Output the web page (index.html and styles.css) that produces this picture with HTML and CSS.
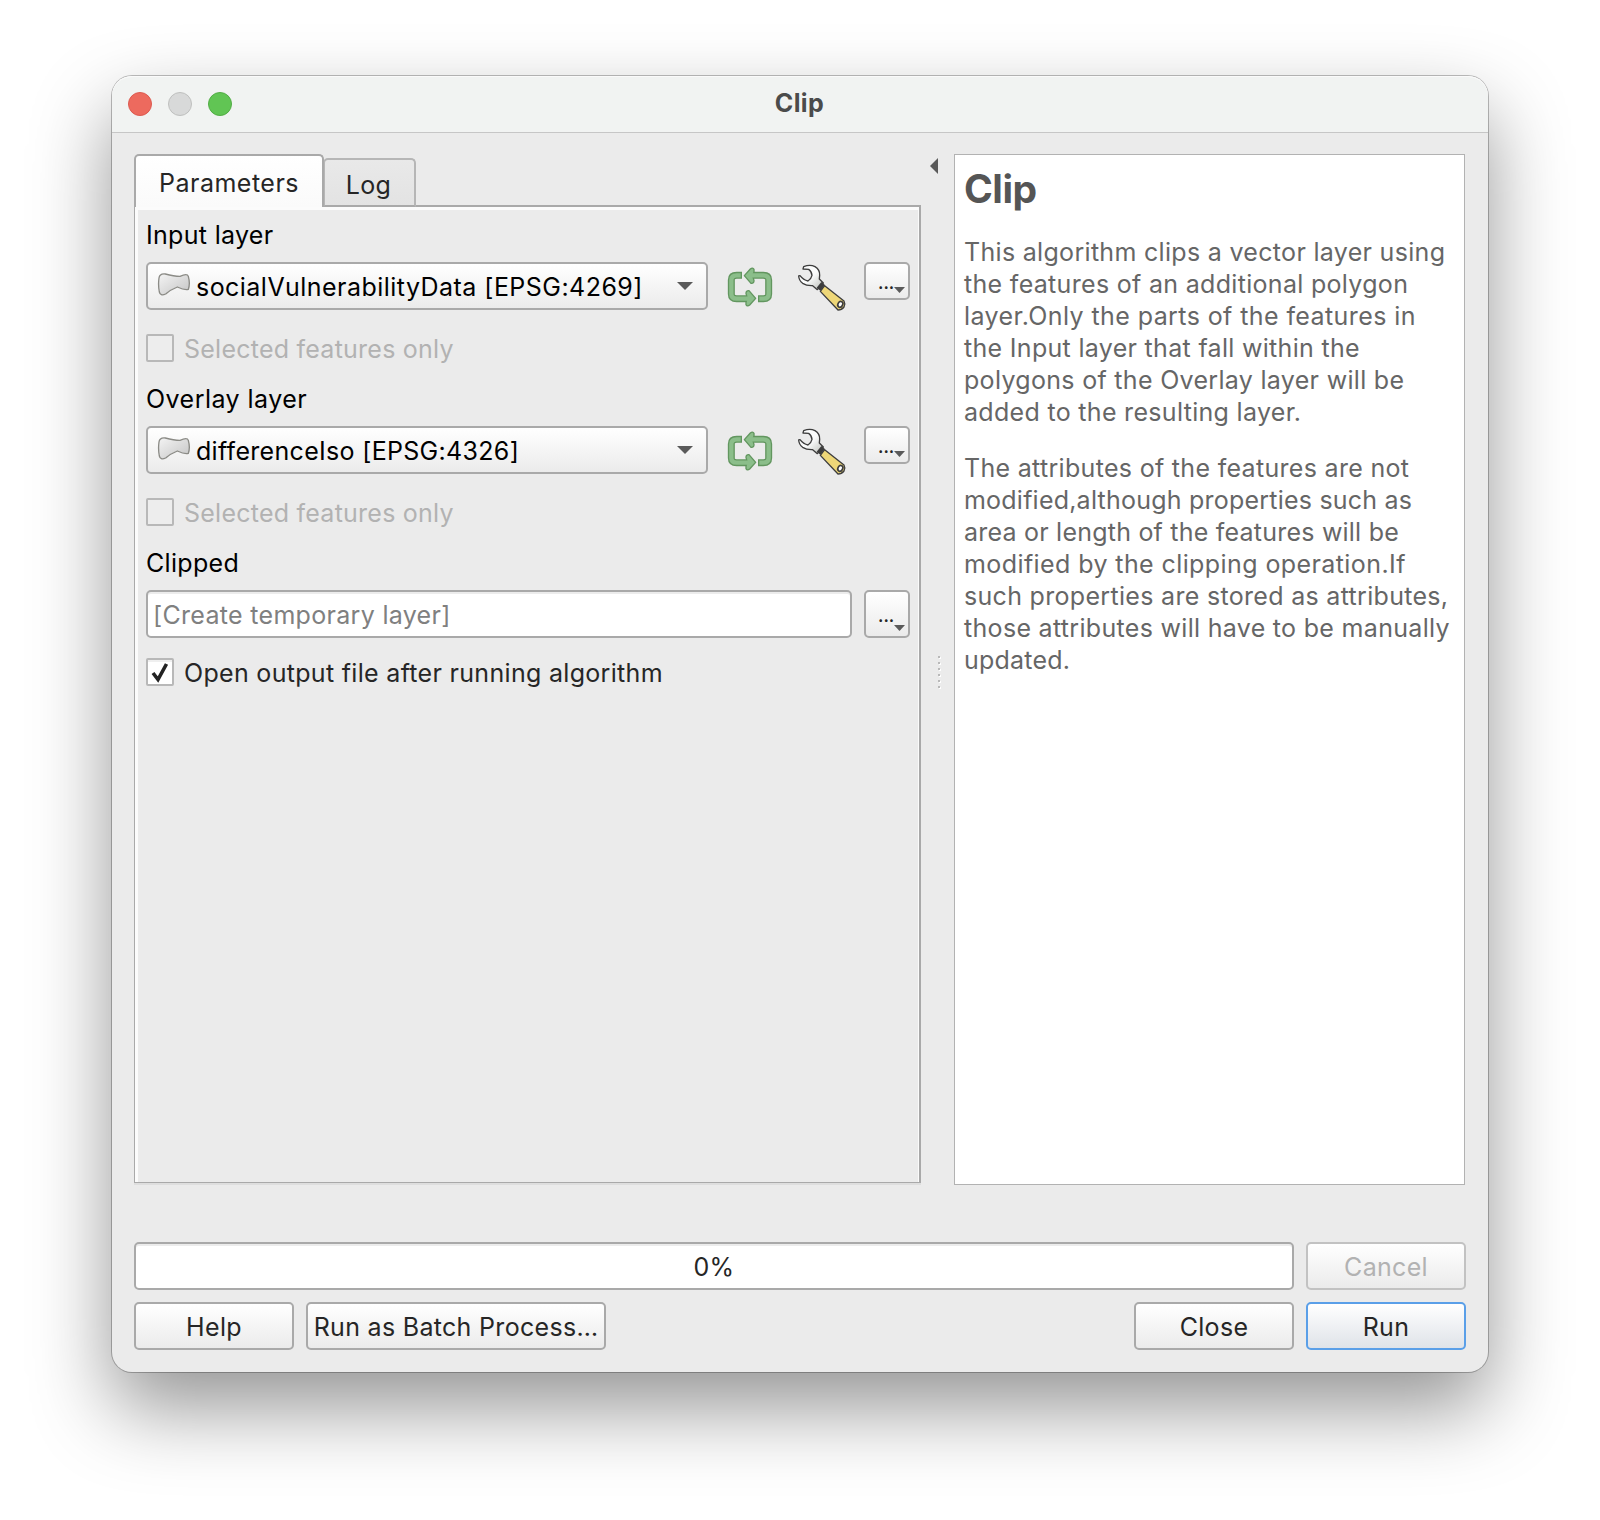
FILE: index.html
```html
<!DOCTYPE html>
<html lang="en">
<head>
<meta charset="utf-8">
<title>Clip</title>
<link rel="stylesheet" href="styles.css">
</head>
<body>
<svg class="defs" width="0" height="0" aria-hidden="true">
  <defs>
    <linearGradient id="poly-fill" x1="0" y1="0" x2="1" y2="1"><stop offset="0" stop-color="#f4f4f4"/><stop offset="1" stop-color="#c4c4c4"/></linearGradient>
    <linearGradient id="steel" x1="0" y1="0" x2="1" y2="1"><stop offset=".5" stop-color="#fbfcfc"/><stop offset="1" stop-color="#b9bcb6"/></linearGradient>
    <symbol id="polygon" viewBox="171 637 102 75">
      <path d="M177 655Q179 641 196 643Q222 650 240 650Q262 640 265 650Q271 672 265 689Q254 692 232 682Q212 690 197 703Q181 710 178 697Q174 676 177 655Z" fill="url(#poly-fill)" stroke="#8b8b86" stroke-width="4"/>
    </symbol>
    <symbol id="iterate" viewBox="51 48 138 126">
      <g fill="none" stroke="#62965f" stroke-width="21" stroke-linejoin="round">
        <path d="M96 76H80Q64 76 64 90V132Q64 146 80 146H118M144 146H160Q176 146 176 132V90Q176 76 160 76H122"/>
      </g>
      <g fill="#8bbe8a" stroke="#62965f" stroke-width="4" stroke-linejoin="round">
        <path d="M103 77L121 57Q128 51 132 58V66L128 77L132 92Q132 101 123 100Z"/>
        <path d="M137 145L119 165Q112 171 108 164V156L112 145L108 130Q108 121 117 122Z"/>
      </g>
      <path d="M92 76H80Q64 76 64 90V132Q64 146 80 146H124M148 146H160Q176 146 176 132V90Q176 76 160 76H116" fill="none" stroke="#8bbe8a" stroke-width="13"/>
    </symbol>
    <symbol id="wrench" viewBox="261 39 150 150">
      <path d="M279 57L281 50Q300 42 315 50Q330 59 329 76L328 87L340 99L322 119L308 107Q290 108 278 100Q267 92 266 78L270 77Q280 90 294 93Q303 88 306 76Q305 64 296 58Z" fill="url(#steel)" stroke="#3d3d3d" stroke-width="4" stroke-linejoin="round"/>
      <path d="M334 96L345 105L331 122L320 113Z" fill="#3d3d3d"/>
      <path d="M344 107L402 153Q407 162 402 171Q395 180 384 180L331 124Z" fill="#eed778" stroke="#3d3d3d" stroke-width="4" stroke-linejoin="round"/>
      <ellipse cx="391" cy="163" rx="7" ry="9" transform="rotate(30 391 163)" fill="#fff" stroke="#3d3d3d" stroke-width="5"/>
    </symbol>
  </defs>
</svg>

<main class="window">
  <header class="titlebar">
    <div class="lights"><i class="light red"></i><i class="light gray"></i><i class="light green"></i></div>
    <span class="title">Clip</span>
  </header>

  <div class="content">
    <div class="upper">
      <section class="left">
        <nav class="tabs">
          <div class="tab active">Parameters</div>
          <div class="tab">Log</div>
        </nav>
        <div class="pane">
          <div class="label">Input layer</div>
          <div class="row">
            <div class="combo"><svg class="poly"><use href="#polygon"/></svg><span class="t wide">socialVulnerabilityData [EPSG:4269]</span><i class="down"></i></div>
            <svg class="iter"><use href="#iterate"/></svg>
            <svg class="wren"><use href="#wrench"/></svg>
            <button class="more"><span>...</span><i></i></button>
          </div>
          <div class="check disabled"><i class="box"></i><span class="t">Selected features only</span></div>
          <div class="label overlay">Overlay layer</div>
          <div class="row">
            <div class="combo"><svg class="poly"><use href="#polygon"/></svg><span class="t">differenceIso [EPSG:4326]</span><i class="down"></i></div>
            <svg class="iter"><use href="#iterate"/></svg>
            <svg class="wren"><use href="#wrench"/></svg>
            <button class="more"><span>...</span><i></i></button>
          </div>
          <div class="check disabled"><i class="box"></i><span class="t">Selected features only</span></div>
          <div class="label">Clipped</div>
          <div class="row">
            <div class="field">[Create temporary layer]</div>
            <button class="more tall"><span>...</span><i></i></button>
          </div>
          <div class="check last"><i class="box"><svg viewBox="0 0 24 24"><path d="M5 13L10 19.500L18.500 4" fill="none" stroke="#222" stroke-width="3.600"/></svg></i><span class="t">Open output file after running algorithm</span></div>
        </div>
      </section>
      <div class="splitter"><i class="collapse"></i><div class="grip"><i></i><i></i><i></i><i></i><i></i><i></i></div></div>
      <article class="help">
        <h1>Clip</h1>
        <p>This algorithm clips a vector layer using<br>the features of an additional polygon<br><span class="loose">layer.Only the parts of the features in</span><br>the Input layer that fall within the<br>polygons of the Overlay layer will be<br>added to the resulting layer.</p>
        <p>The attributes of the features are not<br><span class="tight">modified,although properties such as<br>area or length of the features will be</span><br><span class="loose">modified by the clipping operation.If</span><br>such properties are stored as attributes,<br>those attributes will have to be manually<br><span class="tight">updated.</span></p>
      </article>
    </div>
    <div class="buttons">
      <div class="progress">0%</div>
      <button class="btn off"><span class="t">Cancel</span></button>
    </div>
    <div class="buttons">
      <button class="btn"><span class="t">Help</span></button>
      <button class="btn batch"><span class="t">Run as Batch Process…</span></button>
      <span class="spacer"></span>
      <button class="btn"><span class="t">Close</span></button>
      <button class="btn primary"><span class="t">Run</span></button>
    </div>
  </div>
</main>
</body>
</html>
```
FILE: styles.css
```css
* { box-sizing: border-box; }
body { margin: 0; padding: 76px 112px; height: 1520px; background: #fff; font-family: Inter, "Liberation Sans", sans-serif; font-size: 25px; line-height: 32px; letter-spacing: .31px; color: #262626; overflow: hidden; }
.defs { position: absolute; }
.t { padding-top: 2px; }
.window { width: 1376px; height: 1296px; border-radius: 20px; background: #ebebeb; box-shadow: 0 0 0 1px rgba(0,0,0,.25), 0 36px 80px rgba(0,0,0,.42); }
.titlebar { display: grid; grid-template-columns: 200px 1fr 200px; align-items: center; height: 57px; padding: 0 16px; border-bottom: 1px solid #c6c6c6; border-radius: 20px 20px 0 0; background: #f1f3f2; box-shadow: inset 0 1px #fafafa; }
.lights { display: flex; gap: 16px; }
.light { width: 24px; height: 24px; border: 1px solid; border-radius: 50%; }
.red { background: #ed6a5e; border-color: #dd5a50; }
.gray { background: #d8d9d9; border-color: #bfc0bf; }
.green { background: #61c554; border-color: #52ad45; }
.title { padding-bottom: 2px; text-align: center; font-weight: 700; letter-spacing: .4px; text-indent: -1px; color: #4b4b4b; }
.content { padding: 21px 22px 22px; }
.upper { display: flex; height: 1031px; margin-bottom: 57px; }
.left { width: 787px; height: 1029px; display: flex; flex-direction: column; }
.tabs { display: flex; align-items: flex-end; height: 53px; margin-bottom: -2px; position: relative; }
.tab { display: flex; align-items: center; justify-content: center; width: 93px; height: 49px; padding: 5px 2px 0 0; margin-left: -1px; border: 2px solid #b6b6b6; border-radius: 5px 5px 0 0; border-bottom-color: #a9a9a9; background: linear-gradient(#e9e9e9, #e3e3e3); }
.tab.active { position: relative; width: 190px; height: 53px; padding: 3px 0 0; margin-left: 0; border: 2px solid #a9a9a9; border-bottom: 0; background: linear-gradient(#fff, #fafafa); letter-spacing: .5px; }
.pane { flex: 1; padding: 11px 9px 0 11px; border: solid #a9a9a9; border-width: 2px 2px 1px 1px; box-shadow: inset 3px 3px #fbfbfb, inset -1px 0 #fbfbfb, 0 2px #dedede; color: #000; }
.label { height: 32px; padding-top: 1px; margin-bottom: 12px; }
.overlay, .wide { letter-spacing: .46px; }
.row { display: flex; align-items: flex-start; height: 48px; }
.combo, .field, .progress, .btn, .more { border: 2px solid #a9a9a9; border-radius: 5px; background: linear-gradient(#fff, #ebebeb); }
.combo { display: flex; align-items: center; width: 562px; height: 48px; padding: 0 13px 0 9px; }
.poly { width: 34px; height: 25px; margin: -3px 5px 0 0; }
.down { width: 16px; height: 8px; margin-left: auto; background: #5a5a5a; clip-path: polygon(0 0, 100% 0, 50% 100%); }
.iter { width: 46px; height: 42px; margin: 4px 0 0 19px; }
.wren { width: 50px; height: 50px; margin: 1px 0 0 24px; }
.more { position: relative; width: 46px; height: 38px; padding: 0; margin-left: 17px; }
.more span { position: absolute; left: 12px; top: 7px; font: 600 17px/24px Inter, sans-serif; color: #262626; }
.more i { position: absolute; right: 3px; bottom: 5px; width: 11px; height: 6px; background: #5a5a5a; clip-path: polygon(0 0, 100% 0, 50% 100%); }
.more.tall { height: 48px; margin-left: 12px; }
.more.tall span { top: 12px; }
.check { display: flex; align-items: center; gap: 10px; height: 28px; margin: 24px 0 20px; color: #262626; }
.check.last { margin: 20px 0 0; }
.disabled { letter-spacing: .24px; color: #b2b2b2; }
.box { width: 28px; height: 28px; border: 2px solid #b8b8b8; border-radius: 2px; background: #fff; box-shadow: inset 0 2px #efefef; }
.disabled .box { background: #ededed; box-shadow: none; }
.box svg { display: block; width: 24px; height: 24px; }
.field { width: 706px; height: 48px; padding: 7px 0 0 5px; color: #808080; }
.field, .progress { background: #fff; box-shadow: inset 0 2px #ececec; }
.splitter { position: relative; width: 33px; }
.collapse { position: absolute; left: 9px; top: 4px; width: 8px; height: 16px; background: #5a5a5a; clip-path: polygon(100% 0, 100% 100%, 0 50%); }
.grip { position: absolute; left: 17px; top: 502px; display: grid; gap: 4px; }
.grip i { width: 2px; height: 2px; background: #b9b9b9; box-shadow: 1px 1px #fff; }
.help { width: 511px; padding: 6px 9px; border: 1px solid #b2b2b2; background: #fff; color: #666; white-space: nowrap; }
.help h1 { margin: 4px 0 23px; height: 48px; font-size: 39px; line-height: 48px; letter-spacing: -.5px; color: #555; }
.help p { margin: 0 0 24px; }
.loose { letter-spacing: .41px; }
.tight { letter-spacing: .22px; }
.buttons { display: flex; gap: 12px; margin-bottom: 12px; }
.progress { width: 1160px; height: 48px; line-height: 47px; text-align: center; }
.btn { display: flex; align-items: center; justify-content: center; width: 160px; height: 48px; padding: 0; font: inherit; letter-spacing: inherit; color: #262626; white-space: nowrap; }
.off { border-color: #c2c2c2; color: #b2b2b2; }
.batch { width: 300px; }
.spacer { flex: 1; }
.primary { border-color: #5a9fe8; background: linear-gradient(#fff, #dfe3e9); }
```
